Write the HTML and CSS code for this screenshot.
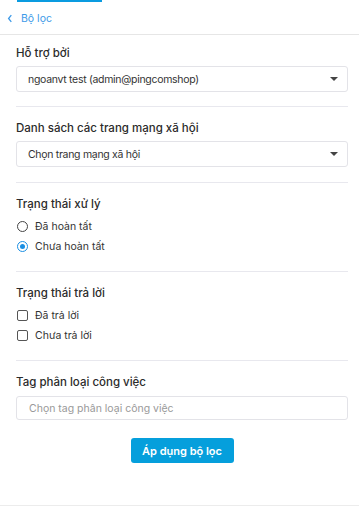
FILE: index.html
```html
<!DOCTYPE html>
<html lang="vi">
<head>
<meta charset="utf-8">
<link rel="stylesheet" href="styles.css">
</head>
<body>
<div class="page">
  <div class="tab-indicator"></div>
  <div class="header">
    <svg class="back" width="6" height="9" viewBox="0 0 6 9"><path d="M4.3 1.2 L1.6 4.5 L4.3 7.8" fill="none" stroke="#3d9ae8" stroke-width="1.3"/></svg>
    <span class="title">Bộ lọc</span>
  </div>
  <div class="content">
    <div class="section s1">
      <div class="label">Hỗ trợ bởi</div>
      <div class="select"><span>ngoanvt test (admin@pingcomshop)</span><span class="caret"></span></div>
    </div>
    <div class="section s2">
      <div class="label">Danh sách các trang mạng xã hội</div>
      <div class="select"><span>Chọn trang mạng xã hội</span><span class="caret"></span></div>
    </div>
    <div class="section s3">
      <div class="label">Trạng thái xử lý</div>
      <div class="options">
        <div class="opt"><span class="radio"></span><span>Đã hoàn tất</span></div>
        <div class="opt"><span class="radio on"></span><span>Chưa hoàn tất</span></div>
      </div>
    </div>
    <div class="section s4">
      <div class="label">Trạng thái trả lời</div>
      <div class="options">
        <div class="opt"><span class="check"></span><span>Đã trả lời</span></div>
        <div class="opt"><span class="check"></span><span>Chưa trả lời</span></div>
      </div>
    </div>
    <div class="section s5 last">
      <div class="label">Tag phân loại công việc</div>
      <div class="input">Chọn tag phân loại công việc</div>
      <div class="actions"><button class="apply">Áp dụng bộ lọc</button></div>
    </div>
  </div>
</div>
</body>
</html>
```
FILE: styles.css
```css
* { box-sizing: border-box; }
html, body { margin: 0; padding: 0; background: #fff; }
body {
  font-family: Inter, "Noto Sans", sans-serif;
  font-size: 11px;
  color: #333;
}
.page {
  width: 359px;
  height: 506px;
  border-bottom: 1px solid #ececec;
}
.tab-indicator {
  margin-left: 17px;
  width: 85px;
  height: 2px;
  background: #0a9be0;
}
.header {
  height: 33px;
  display: flex;
  align-items: center;
  padding-left: 7px;
  border-bottom: 1px solid #e6e6e6;
  color: #3d9ae8;
  font-size: 10.5px;
}
.back { margin-right: 8px; }
.content {
  padding: 0 11px 0 16px;
}
.section {
  border-bottom: 1px solid #e8e8ee;
  padding-top: 13px;
}
.section.last { border-bottom: none; }
.s1 { padding-top: 10px; padding-bottom: 14px; }
.s2 { padding-bottom: 15px; }
.s3 { padding-bottom: 17px; }
.s4 { padding-bottom: 17px; }
.label {
  font-weight: 500;
  line-height: 16px;
  color: #2b2b2b;
  font-size: 11.5px;
}
.select, .input {
  height: 26px;
  margin-top: 5px;
  border: 1px solid #e3e3e8;
  border-radius: 3px;
  display: flex;
  align-items: center;
  padding: 0 9px 0 11px;
  justify-content: space-between;
  color: #333;
  font-size: 10.5px;
}
.select span:first-child { letter-spacing: -0.3px; }
.caret {
  width: 0; height: 0;
  border-left: 4px solid transparent;
  border-right: 4px solid transparent;
  border-top: 4px solid #444;
}
.options {
  display: flex;
  flex-direction: column;
  gap: 4px;
  margin-top: 6px;
}
.opt {
  display: flex;
  align-items: center;
  height: 16px;
  gap: 7px;
  color: #333;
  font-size: 10.5px;
}
.radio {
  width: 11px; height: 11px;
  border: 1px solid #444;
  border-radius: 50%;
  margin-left: 1px;
  display: inline-flex;
  align-items: center;
  justify-content: center;
}
.radio.on { border-color: #1a8fe3; }
.radio.on::after {
  content: "";
  width: 5px; height: 5px;
  border-radius: 50%;
  background: #1a8fe3;
}
.check {
  width: 11px; height: 11px;
  border: 1.3px solid #555;
  border-radius: 2px;
  margin-left: 1px;
}
.input {
  margin-top: 6px;
  height: 24px;
  color: #999;
  justify-content: flex-start;
  padding-left: 12px;
  font-size: 10.5px;
}
.actions {
  display: flex;
  justify-content: center;
  margin-top: 18px;
}
.apply {
  background: #059fdc;
  border: none;
  border-radius: 3px;
  color: #fff;
  font-family: Inter, "Noto Sans", sans-serif;
  font-weight: 600;
  font-size: 11px;
  width: 103px;
  height: 25px;
  padding: 0;
}
```
